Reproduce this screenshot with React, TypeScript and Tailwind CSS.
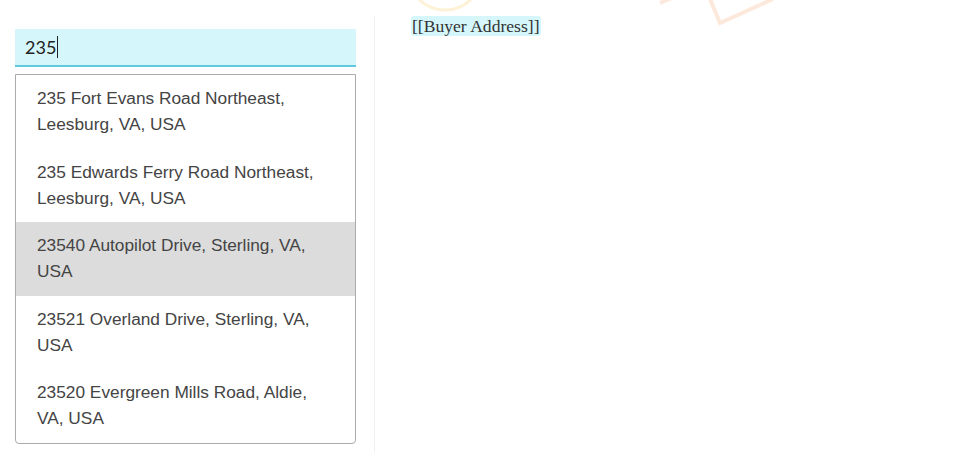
import React from 'react'

const suggestions = [
  '235 Fort Evans Road Northeast, Leesburg, VA, USA',
  '235 Edwards Ferry Road Northeast, Leesburg, VA, USA',
  '23540 Autopilot Drive, Sterling, VA, USA',
  '23521 Overland Drive, Sterling, VA, USA',
  '23520 Evergreen Mills Road, Aldie, VA, USA',
]

export default function App() {
  return (
    <div className="relative w-[974px] h-[452px] bg-white overflow-hidden flex">
      {/* faint decorations at the top */}
      <svg className="absolute left-0 top-0 pointer-events-none" width="974" height="40">
        <circle cx="445" cy="-27" r="37" fill="none" stroke="#fdf2d6" strokeWidth="3" />
        <path d="M710 -1 L720 23 L773 -1" fill="none" stroke="#fde9dc" strokeWidth="4" />
        <path d="M660 3 L674 -3" fill="none" stroke="#fde9dc" strokeWidth="4" />
      </svg>

      {/* Left column */}
      <div className="w-[375px] mt-4 pl-[15px] pr-[18px] pt-[13px] border-r border-[#f0f0f0]">
        <div className="h-[38px] bg-[#d5f6fb] border-b-2 border-[#5fc9dd] flex items-center pl-[10px] font-['Lato',sans-serif] text-[18px] text-[#222]">
          235<span className="w-px h-[22px] bg-[#222] ml-px" />
        </div>
        <ul className="mt-[7px] border border-[#ababab] rounded-b-[4px] bg-white font-['Liberation_Sans',Arial,sans-serif] text-[17.3px] leading-[26px] text-[#444]">
          {suggestions.map((s, i) => (
            <li
              key={s}
              className={
                i === 2
                  ? 'h-[73.5px] pt-[10px] pl-[21px] pr-[30px] bg-[#dcdcdc]'
                  : 'h-[73.5px] pt-[10px] pl-[21px] pr-[30px]'
              }
            >
              {s}
            </li>
          ))}
        </ul>
      </div>

      {/* Right column */}
      <div className="flex-1 pl-[36px] pt-[14px]">
        <span className="inline-block bg-[#d5f6fb] rounded-[3px] px-[1px] font-['Liberation_Serif',serif] text-[17.6px] leading-[20px] text-[#333]">
          [[Buyer Address]]
        </span>
      </div>
    </div>
  )
}
